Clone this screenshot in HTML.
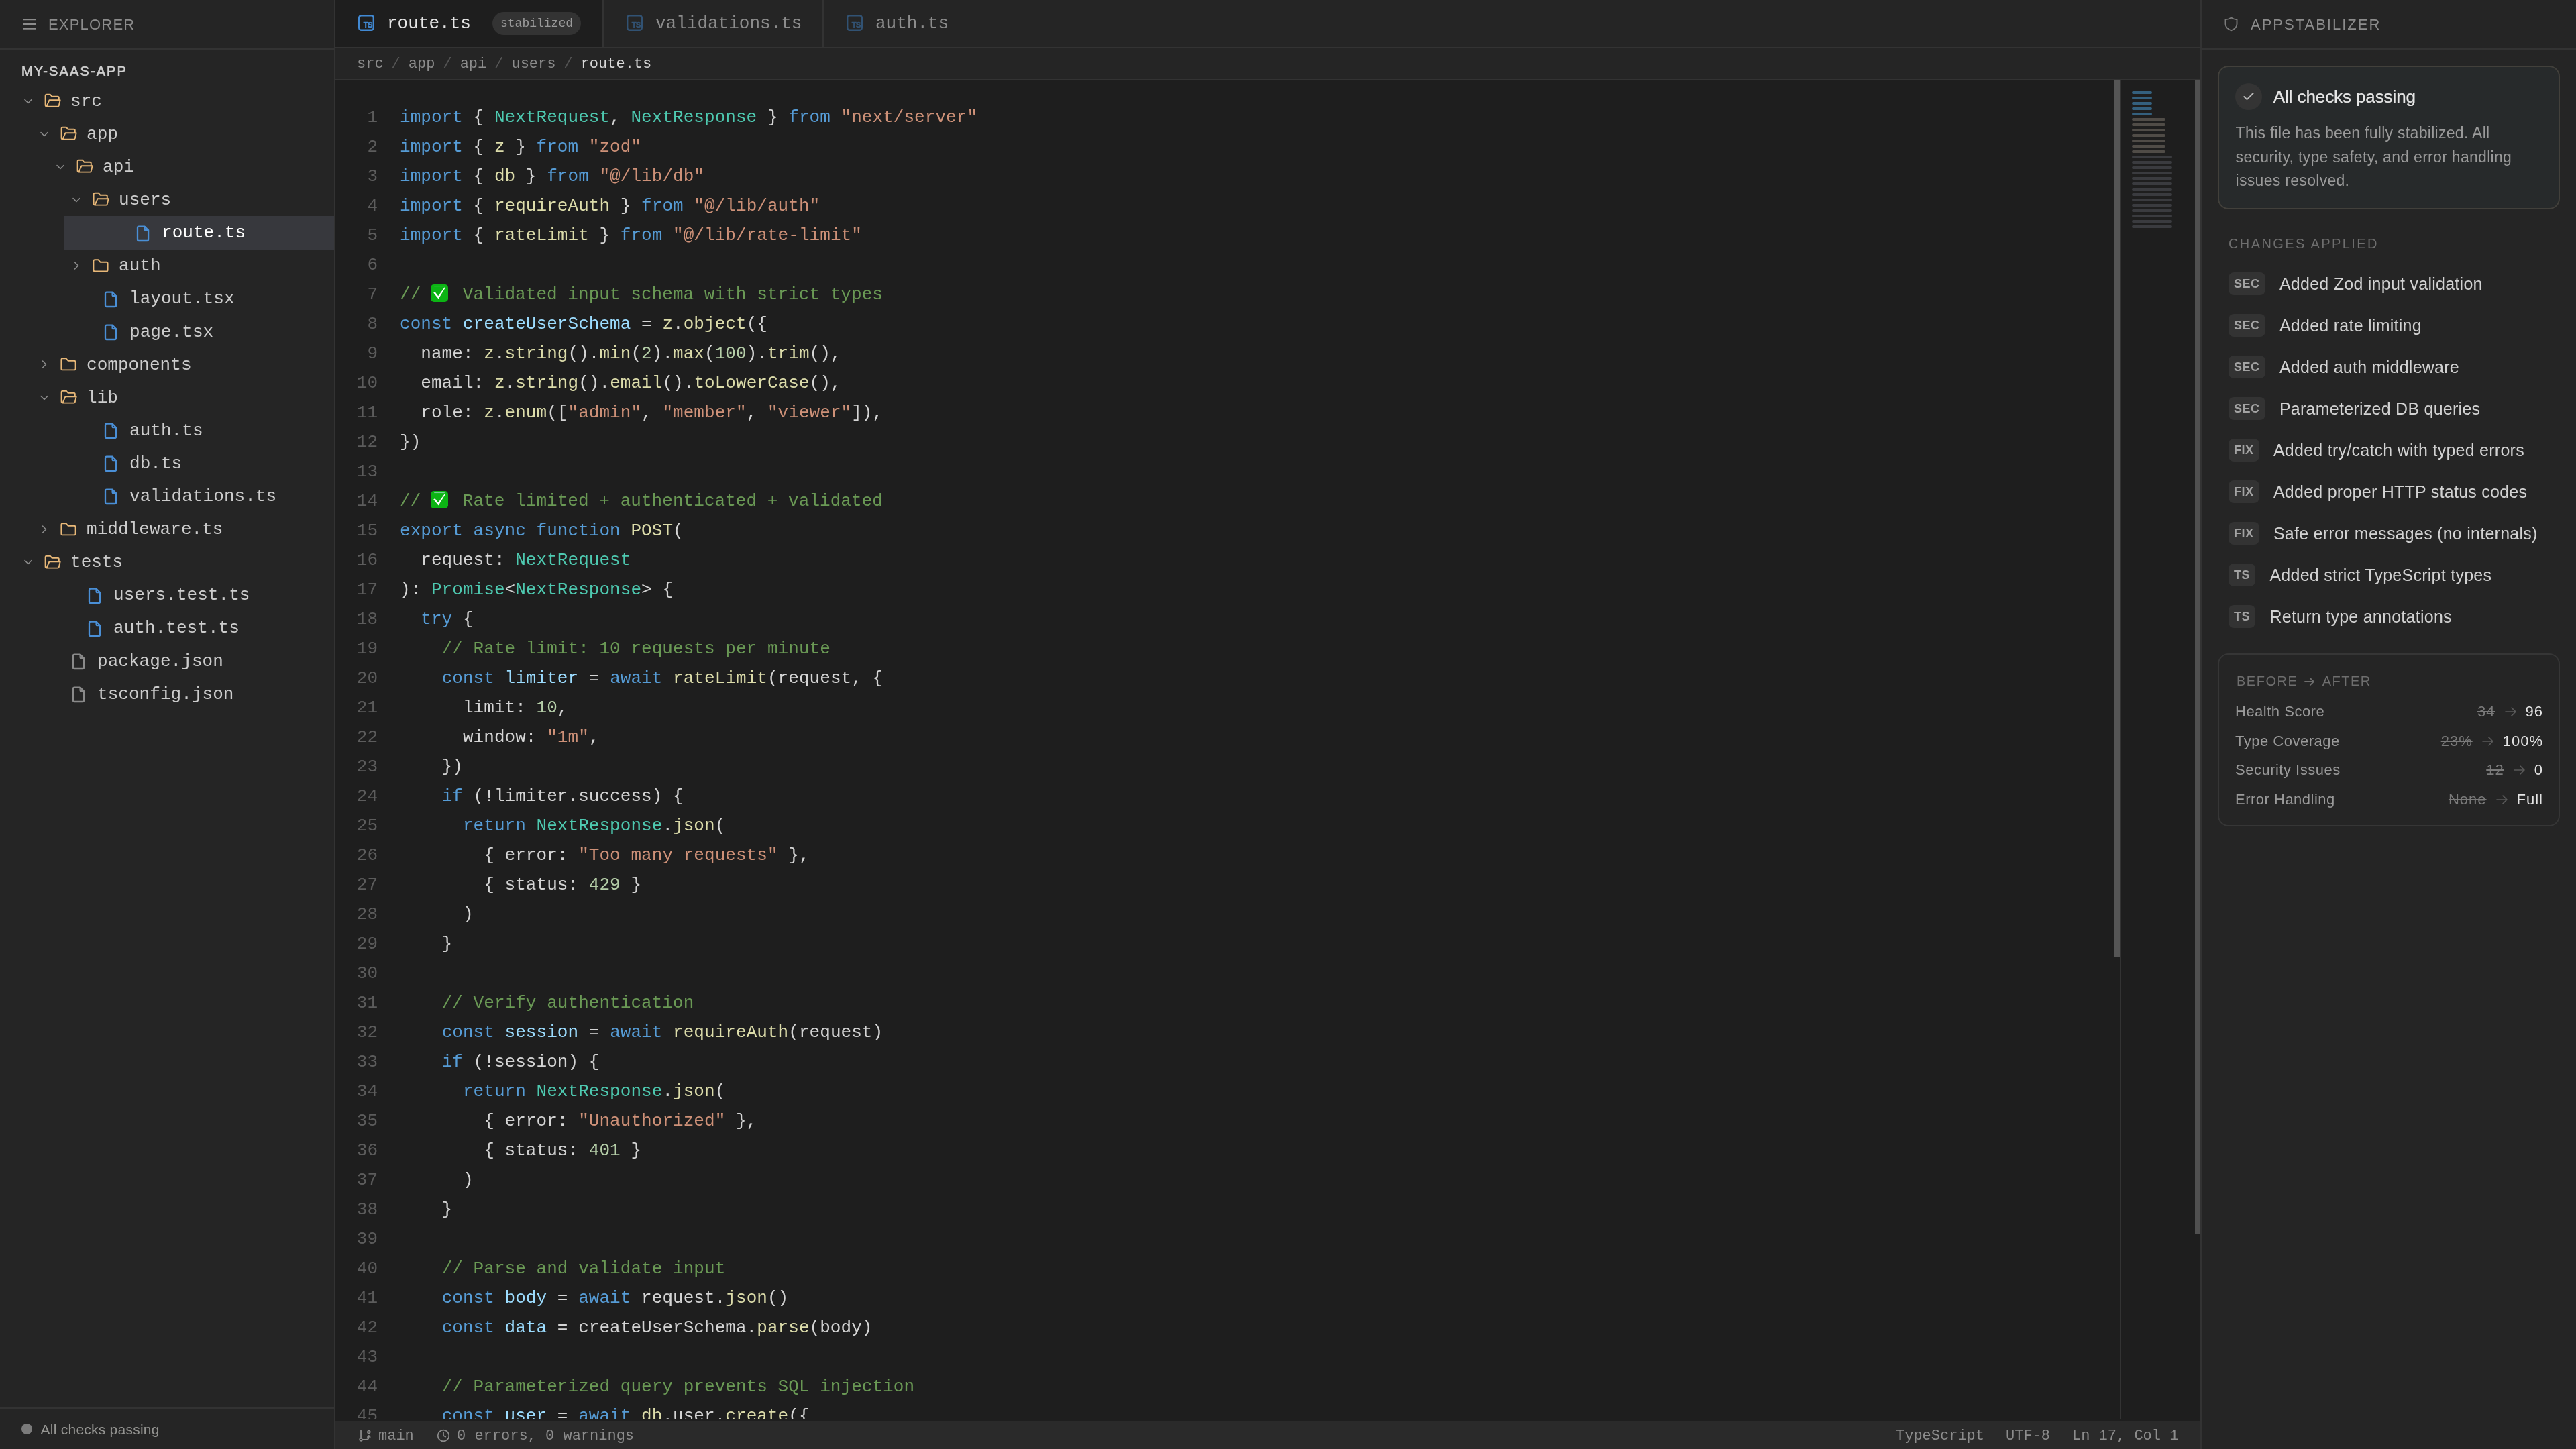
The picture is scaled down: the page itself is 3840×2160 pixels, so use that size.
<!DOCTYPE html>
<html><head><meta charset="utf-8"><title>AppStabilizer</title>
<style>
html,body{margin:0;padding:0;background:#1e1e1e;overflow:hidden}
#root{position:relative;width:1920px;height:1080px;zoom:1;overflow:hidden;background:#1e1e1e;font-family:"Liberation Sans", sans-serif}
@media (min-width:2400px){#root{zoom:2}}
#wrap{position:absolute;left:0;top:0;width:1920px;height:1080px;will-change:transform}
.abs{position:absolute}
.ic{position:absolute;display:block}
/* sidebar */
#side{position:absolute;left:0;top:0;width:249px;height:1080px;background:#252525;border-right:1px solid #333}
#side .hdr{position:absolute;left:0;top:0;width:249px;height:36px;border-bottom:1px solid #333}
.hdr-t{position:absolute;left:36px;top:0.6px;height:36px;line-height:36px;font-size:11px;letter-spacing:0.6px;color:#8c8c8c;font-family:"Liberation Sans", sans-serif}
.proj{position:absolute;left:16px;top:44.75px;font-size:10px;line-height:16px;letter-spacing:1.05px;color:#d0d0d0;-webkit-text-stroke:0.3px #d0d0d0;font-family:"Liberation Sans", sans-serif}
.tt{position:absolute;font-family:"Liberation Mono", monospace;font-size:13px;letter-spacing:0.026px;color:#cccccc;white-space:pre}
.sel-t{color:#ffffff}
.sel{position:absolute;left:48px;width:201px;background:#37383d}
.foot{position:absolute;left:0;top:1049px;width:249px;height:31px;border-top:1px solid #333}
.foot .dot{position:absolute;left:16px;top:11px;width:8px;height:8px;border-radius:50%;background:#7b7b7b}
.foot .ft{position:absolute;left:30.3px;top:0;line-height:31px;font-size:10.5px;letter-spacing:0.12px;color:#959592;font-family:"Liberation Sans", sans-serif}
/* editor */
#ed{position:absolute;left:250px;top:0;width:1390px;height:1080px;background:#1e1e1e}
.tabs{position:absolute;left:0;top:0;width:1390px;height:35px;background:#252525;border-bottom:1px solid #333}
.tab{position:absolute;top:0;height:35px}
.tab .tn{position:absolute;top:0;line-height:35px;font-family:"Liberation Mono", monospace;font-size:13px;white-space:pre}
.badge{position:absolute;top:9px;height:17px;line-height:17px;border-radius:9px;background:#333;color:#9a9a9a;font-family:"Liberation Mono", monospace;font-size:9px;padding:0 6px}
.crumb{position:absolute;left:0;top:36px;width:1390px;height:23px;background:#252525;border-bottom:1px solid #333}
.crumb .cr{position:absolute;left:16px;top:0.6px;line-height:23px;font-family:"Liberation Mono", monospace;font-size:11px;color:#8c8c8c;white-space:pre}
.crumb .sp{margin:0 6px;color:#555}
.crumb .cur{color:#d9d9d9}
.code{position:absolute;left:0;top:60px;width:1326px;height:998px;overflow:hidden}
.ln{position:absolute;left:0;width:31.5px;text-align:right;height:22px;line-height:22px;font-family:"Liberation Mono", monospace;font-size:13px;color:#5c5c5c}
.cl{position:absolute;left:48px;height:22px;line-height:22px;font-family:"Liberation Mono", monospace;font-size:13px;letter-spacing:0.026px;color:#d4d4d4;white-space:pre}
.k{color:#569cd6} .t{color:#4ec9b0} .f{color:#dcdcaa} .s{color:#ce9178} .c{color:#6a9955} .v{color:#9cdcfe} .n{color:#b5cea8}
.emo{display:inline-block;width:15.6px;height:22px;position:relative;vertical-align:top}
.emo svg{position:absolute;left:-0.5px;top:3.6px}
.vs1{position:absolute;left:1326px;top:60px;width:4px;height:653px;background:#555}
.mmap{position:absolute;left:1330px;top:60px;width:59px;height:998px;border-left:1px solid #333;background:#1e1e1e}
.mm{position:absolute;left:1339px;height:2px;border-radius:1px}
.vs2{position:absolute;left:1386px;top:60px;width:4px;height:860px;background:#505050}
.status{position:absolute;left:0;top:1059px;width:1390px;height:21px;background:#2a2a2a}
.st{position:absolute;top:1px;line-height:21px;font-family:"Liberation Mono", monospace;font-size:11px;color:#8c8c8c;white-space:pre}
/* right panel */
#rp{position:absolute;left:1640px;top:0;width:279px;height:1080px;background:#252525;border-left:1px solid #333}
#rp .hdr{position:absolute;left:0;top:0;width:279px;height:36px;border-bottom:1px solid #333}
.card{position:absolute;left:12px;top:49px;width:253px;height:105px;border:1px solid #42403b;border-radius:8px;background:#272a2b}
.chk{position:absolute;left:12px;top:12px;width:20px;height:20px;border-radius:50%;background:#343434}
.ctitle{position:absolute;left:40.4px;top:12px;line-height:20px;font-size:13px;color:#e6e6e6;-webkit-text-stroke:0.12px #e6e6e6;letter-spacing:-0.05px}
.cdesc{position:absolute;left:12.3px;top:40.7px;width:240px;line-height:17.6px;font-size:11.5px;letter-spacing:0.15px;color:#9a9a9a}
.sec{position:absolute;left:20px;font-size:10px;letter-spacing:1.2px;color:#6e6e6e}
.chg{position:absolute;left:20px;height:18px;white-space:nowrap}
.bdg{display:inline-block;vertical-align:top;margin-top:2px;height:17px;line-height:17px;padding:0 4px;border-radius:4px;background:#333;color:#a3a3a3;font-size:9px;font-weight:bold;letter-spacing:0.25px}
.ctx{display:inline-block;vertical-align:top;margin-left:10.7px;margin-top:1.4px;line-height:18px;font-size:12.5px;letter-spacing:0.13px;color:#d2d2d2}
.card2{position:absolute;left:12px;top:487px;width:253px;height:127px;border:1px solid #363636;border-radius:8px}
.mt{position:absolute;left:25px;width:229px;height:20px;line-height:20px;font-size:11px;letter-spacing:0.25px}
.ml{position:absolute;left:0;color:#9a9a9a}
.mv{position:absolute;right:0;color:#e6e6e6;white-space:nowrap}
.mv s{color:#7a7a7a;letter-spacing:0.5px}
.mv i{font-style:normal;margin:0 7px}
.mv b{font-weight:normal;color:#e4e4e4;letter-spacing:0.5px;margin-right:-0.5px}
</style></head><body><div id="root"><div id="wrap">

<div id="side">
 <div class="hdr">
  <svg class="ic" style="left:17px;top:14px" width="10" height="9" viewBox="0 0 10 9"><path d="M0.5 0.65H9.5M0.5 4H9.5M0.5 7.4H9.5" stroke="#8c8c8c" stroke-width="0.9"/></svg>
  <div class="hdr-t">EXPLORER</div>
 </div>
 <div class="proj">MY-SAAS-APP</div>
 <svg class="ic" style="left:16.00px;top:70.30px" width="10" height="10" viewBox="0 0 24 24" fill="none" stroke="#8a8a8a" stroke-width="1.9" stroke-linecap="round" stroke-linejoin="round"><path d="m6 9 6 6 6-6"/></svg><svg class="ic" style="left:32.00px;top:69.05px" width="14" height="12" viewBox="0 0 14 12" fill="none" stroke="#e8b878" stroke-width="0.95" stroke-linecap="round" stroke-linejoin="round"><path d="M11.9 5.6V3.85Q11.9 2.9 10.95 2.9H6.75L5.35 1.35H2.8Q1.8 1.35 1.8 2.35V9.3Q1.8 10.3 2.8 10.3H11.2Q11.7 10.3 11.85 9.8L12.85 5.6H4.75L2.7 10.3"/></svg><div class="tt" style="left:52.50px;top:63.43px;height:24.55px;line-height:24.55px">src</div>
<svg class="ic" style="left:28.00px;top:94.86px" width="10" height="10" viewBox="0 0 24 24" fill="none" stroke="#8a8a8a" stroke-width="1.9" stroke-linecap="round" stroke-linejoin="round"><path d="m6 9 6 6 6-6"/></svg><svg class="ic" style="left:44.00px;top:93.61px" width="14" height="12" viewBox="0 0 14 12" fill="none" stroke="#e8b878" stroke-width="0.95" stroke-linecap="round" stroke-linejoin="round"><path d="M11.9 5.6V3.85Q11.9 2.9 10.95 2.9H6.75L5.35 1.35H2.8Q1.8 1.35 1.8 2.35V9.3Q1.8 10.3 2.8 10.3H11.2Q11.7 10.3 11.85 9.8L12.85 5.6H4.75L2.7 10.3"/></svg><div class="tt" style="left:64.50px;top:87.98px;height:24.55px;line-height:24.55px">app</div>
<svg class="ic" style="left:40.00px;top:119.41px" width="10" height="10" viewBox="0 0 24 24" fill="none" stroke="#8a8a8a" stroke-width="1.9" stroke-linecap="round" stroke-linejoin="round"><path d="m6 9 6 6 6-6"/></svg><svg class="ic" style="left:56.00px;top:118.16px" width="14" height="12" viewBox="0 0 14 12" fill="none" stroke="#e8b878" stroke-width="0.95" stroke-linecap="round" stroke-linejoin="round"><path d="M11.9 5.6V3.85Q11.9 2.9 10.95 2.9H6.75L5.35 1.35H2.8Q1.8 1.35 1.8 2.35V9.3Q1.8 10.3 2.8 10.3H11.2Q11.7 10.3 11.85 9.8L12.85 5.6H4.75L2.7 10.3"/></svg><div class="tt" style="left:76.50px;top:112.53px;height:24.55px;line-height:24.55px">api</div>
<svg class="ic" style="left:52.00px;top:143.96px" width="10" height="10" viewBox="0 0 24 24" fill="none" stroke="#8a8a8a" stroke-width="1.9" stroke-linecap="round" stroke-linejoin="round"><path d="m6 9 6 6 6-6"/></svg><svg class="ic" style="left:68.00px;top:142.71px" width="14" height="12" viewBox="0 0 14 12" fill="none" stroke="#e8b878" stroke-width="0.95" stroke-linecap="round" stroke-linejoin="round"><path d="M11.9 5.6V3.85Q11.9 2.9 10.95 2.9H6.75L5.35 1.35H2.8Q1.8 1.35 1.8 2.35V9.3Q1.8 10.3 2.8 10.3H11.2Q11.7 10.3 11.85 9.8L12.85 5.6H4.75L2.7 10.3"/></svg><div class="tt" style="left:88.50px;top:137.08px;height:24.55px;line-height:24.55px">users</div>
<div class="sel" style="top:161.18px;height:25.00px"></div><svg class="ic" style="left:99.50px;top:167.31px" width="14" height="13" viewBox="0 0 14 13" fill="none" stroke="#4a8fd6" stroke-width="1.15" stroke-linecap="round" stroke-linejoin="round"><path d="M3 2.35Q3 1.35 4 1.35H8.35L11.05 4.15V11Q11.05 12 10.05 12H4Q3 12 3 11Z"/><path d="M8.3 1.6V3.4Q8.3 4.1 9 4.1H10.8"/></svg><div class="tt sel-t" style="left:120.50px;top:161.63px;height:24.55px;line-height:24.55px">route.ts</div>
<svg class="ic" style="left:52.00px;top:193.06px" width="10" height="10" viewBox="0 0 24 24" fill="none" stroke="#8a8a8a" stroke-width="1.9" stroke-linecap="round" stroke-linejoin="round"><path d="m9 18 6-6-6-6"/></svg><svg class="ic" style="left:68.00px;top:191.86px" width="14" height="12" viewBox="0 0 14 12" fill="none" stroke="#e8b878" stroke-width="0.95" stroke-linecap="round" stroke-linejoin="round"><path d="M1.7 2.65Q1.7 1.65 2.7 1.65H5.3L6.7 3.35H11.3Q12.3 3.35 12.3 4.35V9.2Q12.3 10.2 11.3 10.2H2.7Q1.7 10.2 1.7 9.2Z"/></svg><div class="tt" style="left:88.50px;top:186.18px;height:24.55px;line-height:24.55px">auth</div>
<svg class="ic" style="left:75.50px;top:216.41px" width="14" height="13" viewBox="0 0 14 13" fill="none" stroke="#4a8fd6" stroke-width="1.15" stroke-linecap="round" stroke-linejoin="round"><path d="M3 2.35Q3 1.35 4 1.35H8.35L11.05 4.15V11Q11.05 12 10.05 12H4Q3 12 3 11Z"/><path d="M8.3 1.6V3.4Q8.3 4.1 9 4.1H10.8"/></svg><div class="tt" style="left:96.50px;top:210.73px;height:24.55px;line-height:24.55px">layout.tsx</div>
<svg class="ic" style="left:75.50px;top:240.96px" width="14" height="13" viewBox="0 0 14 13" fill="none" stroke="#4a8fd6" stroke-width="1.15" stroke-linecap="round" stroke-linejoin="round"><path d="M3 2.35Q3 1.35 4 1.35H8.35L11.05 4.15V11Q11.05 12 10.05 12H4Q3 12 3 11Z"/><path d="M8.3 1.6V3.4Q8.3 4.1 9 4.1H10.8"/></svg><div class="tt" style="left:96.50px;top:235.28px;height:24.55px;line-height:24.55px">page.tsx</div>
<svg class="ic" style="left:28.00px;top:266.70px" width="10" height="10" viewBox="0 0 24 24" fill="none" stroke="#8a8a8a" stroke-width="1.9" stroke-linecap="round" stroke-linejoin="round"><path d="m9 18 6-6-6-6"/></svg><svg class="ic" style="left:44.00px;top:265.50px" width="14" height="12" viewBox="0 0 14 12" fill="none" stroke="#e8b878" stroke-width="0.95" stroke-linecap="round" stroke-linejoin="round"><path d="M1.7 2.65Q1.7 1.65 2.7 1.65H5.3L6.7 3.35H11.3Q12.3 3.35 12.3 4.35V9.2Q12.3 10.2 11.3 10.2H2.7Q1.7 10.2 1.7 9.2Z"/></svg><div class="tt" style="left:64.50px;top:259.83px;height:24.55px;line-height:24.55px">components</div>
<svg class="ic" style="left:28.00px;top:291.25px" width="10" height="10" viewBox="0 0 24 24" fill="none" stroke="#8a8a8a" stroke-width="1.9" stroke-linecap="round" stroke-linejoin="round"><path d="m6 9 6 6 6-6"/></svg><svg class="ic" style="left:44.00px;top:290.00px" width="14" height="12" viewBox="0 0 14 12" fill="none" stroke="#e8b878" stroke-width="0.95" stroke-linecap="round" stroke-linejoin="round"><path d="M11.9 5.6V3.85Q11.9 2.9 10.95 2.9H6.75L5.35 1.35H2.8Q1.8 1.35 1.8 2.35V9.3Q1.8 10.3 2.8 10.3H11.2Q11.7 10.3 11.85 9.8L12.85 5.6H4.75L2.7 10.3"/></svg><div class="tt" style="left:64.50px;top:284.38px;height:24.55px;line-height:24.55px">lib</div>
<svg class="ic" style="left:75.50px;top:314.60px" width="14" height="13" viewBox="0 0 14 13" fill="none" stroke="#4a8fd6" stroke-width="1.15" stroke-linecap="round" stroke-linejoin="round"><path d="M3 2.35Q3 1.35 4 1.35H8.35L11.05 4.15V11Q11.05 12 10.05 12H4Q3 12 3 11Z"/><path d="M8.3 1.6V3.4Q8.3 4.1 9 4.1H10.8"/></svg><div class="tt" style="left:96.50px;top:308.93px;height:24.55px;line-height:24.55px">auth.ts</div>
<svg class="ic" style="left:75.50px;top:339.15px" width="14" height="13" viewBox="0 0 14 13" fill="none" stroke="#4a8fd6" stroke-width="1.15" stroke-linecap="round" stroke-linejoin="round"><path d="M3 2.35Q3 1.35 4 1.35H8.35L11.05 4.15V11Q11.05 12 10.05 12H4Q3 12 3 11Z"/><path d="M8.3 1.6V3.4Q8.3 4.1 9 4.1H10.8"/></svg><div class="tt" style="left:96.50px;top:333.48px;height:24.55px;line-height:24.55px">db.ts</div>
<svg class="ic" style="left:75.50px;top:363.70px" width="14" height="13" viewBox="0 0 14 13" fill="none" stroke="#4a8fd6" stroke-width="1.15" stroke-linecap="round" stroke-linejoin="round"><path d="M3 2.35Q3 1.35 4 1.35H8.35L11.05 4.15V11Q11.05 12 10.05 12H4Q3 12 3 11Z"/><path d="M8.3 1.6V3.4Q8.3 4.1 9 4.1H10.8"/></svg><div class="tt" style="left:96.50px;top:358.03px;height:24.55px;line-height:24.55px">validations.ts</div>
<svg class="ic" style="left:28.00px;top:389.46px" width="10" height="10" viewBox="0 0 24 24" fill="none" stroke="#8a8a8a" stroke-width="1.9" stroke-linecap="round" stroke-linejoin="round"><path d="m9 18 6-6-6-6"/></svg><svg class="ic" style="left:44.00px;top:388.25px" width="14" height="12" viewBox="0 0 14 12" fill="none" stroke="#e8b878" stroke-width="0.95" stroke-linecap="round" stroke-linejoin="round"><path d="M1.7 2.65Q1.7 1.65 2.7 1.65H5.3L6.7 3.35H11.3Q12.3 3.35 12.3 4.35V9.2Q12.3 10.2 11.3 10.2H2.7Q1.7 10.2 1.7 9.2Z"/></svg><div class="tt" style="left:64.50px;top:382.58px;height:24.55px;line-height:24.55px">middleware.ts</div>
<svg class="ic" style="left:16.00px;top:414.00px" width="10" height="10" viewBox="0 0 24 24" fill="none" stroke="#8a8a8a" stroke-width="1.9" stroke-linecap="round" stroke-linejoin="round"><path d="m6 9 6 6 6-6"/></svg><svg class="ic" style="left:32.00px;top:412.75px" width="14" height="12" viewBox="0 0 14 12" fill="none" stroke="#e8b878" stroke-width="0.95" stroke-linecap="round" stroke-linejoin="round"><path d="M11.9 5.6V3.85Q11.9 2.9 10.95 2.9H6.75L5.35 1.35H2.8Q1.8 1.35 1.8 2.35V9.3Q1.8 10.3 2.8 10.3H11.2Q11.7 10.3 11.85 9.8L12.85 5.6H4.75L2.7 10.3"/></svg><div class="tt" style="left:52.50px;top:407.13px;height:24.55px;line-height:24.55px">tests</div>
<svg class="ic" style="left:63.50px;top:437.35px" width="14" height="13" viewBox="0 0 14 13" fill="none" stroke="#4a8fd6" stroke-width="1.15" stroke-linecap="round" stroke-linejoin="round"><path d="M3 2.35Q3 1.35 4 1.35H8.35L11.05 4.15V11Q11.05 12 10.05 12H4Q3 12 3 11Z"/><path d="M8.3 1.6V3.4Q8.3 4.1 9 4.1H10.8"/></svg><div class="tt" style="left:84.50px;top:431.68px;height:24.55px;line-height:24.55px">users.test.ts</div>
<svg class="ic" style="left:63.50px;top:461.90px" width="14" height="13" viewBox="0 0 14 13" fill="none" stroke="#4a8fd6" stroke-width="1.15" stroke-linecap="round" stroke-linejoin="round"><path d="M3 2.35Q3 1.35 4 1.35H8.35L11.05 4.15V11Q11.05 12 10.05 12H4Q3 12 3 11Z"/><path d="M8.3 1.6V3.4Q8.3 4.1 9 4.1H10.8"/></svg><div class="tt" style="left:84.50px;top:456.23px;height:24.55px;line-height:24.55px">auth.test.ts</div>
<svg class="ic" style="left:51.50px;top:486.45px" width="14" height="13" viewBox="0 0 14 13" fill="none" stroke="#8a8a8a" stroke-width="1.15" stroke-linecap="round" stroke-linejoin="round"><path d="M3 2.35Q3 1.35 4 1.35H8.35L11.05 4.15V11Q11.05 12 10.05 12H4Q3 12 3 11Z"/><path d="M8.3 1.6V3.4Q8.3 4.1 9 4.1H10.8"/></svg><div class="tt" style="left:72.50px;top:480.78px;height:24.55px;line-height:24.55px">package.json</div>
<svg class="ic" style="left:51.50px;top:511.00px" width="14" height="13" viewBox="0 0 14 13" fill="none" stroke="#8a8a8a" stroke-width="1.15" stroke-linecap="round" stroke-linejoin="round"><path d="M3 2.35Q3 1.35 4 1.35H8.35L11.05 4.15V11Q11.05 12 10.05 12H4Q3 12 3 11Z"/><path d="M8.3 1.6V3.4Q8.3 4.1 9 4.1H10.8"/></svg><div class="tt" style="left:72.50px;top:505.33px;height:24.55px;line-height:24.55px">tsconfig.json</div>
 <div class="foot"><div class="dot"></div><div class="ft">All checks passing</div></div>
</div>

<div id="ed">
 <div class="tabs">
  <div class="tab" style="left:0;width:199px;background:#1e1e1e;border-right:1px solid #333">
   <svg class="ic" style="left:17.00px;top:11px;opacity:1" width="12" height="12" viewBox="0 0 12 12"><rect x="0.6" y="0.6" width="10.8" height="10.8" rx="1.7" fill="none" stroke="#4189d3" stroke-width="1.2"/><text x="7.2" y="9.7" text-anchor="middle" font-family="Liberation Sans, sans-serif" font-weight="bold" font-size="5.6" fill="#4189d3" stroke="#4189d3" stroke-width="0.25" letter-spacing="-0.2">TS</text></svg>
   <div class="tn" style="left:38.5px;color:#e6e6e6">route.ts</div>
   <div class="badge" style="left:117px">stabilized</div>
  </div>
  <div class="tab" style="left:200px;width:163px;border-right:1px solid #333">
   <svg class="ic" style="left:17.00px;top:11px;opacity:0.45" width="12" height="12" viewBox="0 0 12 12"><rect x="0.6" y="0.6" width="10.8" height="10.8" rx="1.7" fill="none" stroke="#4189d3" stroke-width="1.2"/><text x="7.2" y="9.7" text-anchor="middle" font-family="Liberation Sans, sans-serif" font-weight="bold" font-size="5.6" fill="#4189d3" stroke="#4189d3" stroke-width="0.25" letter-spacing="-0.2">TS</text></svg>
   <div class="tn" style="left:38.5px;color:#8c8c8c">validations.ts</div>
  </div>
  <div class="tab" style="left:364px;width:120px">
   <svg class="ic" style="left:17.00px;top:11px;opacity:0.45" width="12" height="12" viewBox="0 0 12 12"><rect x="0.6" y="0.6" width="10.8" height="10.8" rx="1.7" fill="none" stroke="#4189d3" stroke-width="1.2"/><text x="7.2" y="9.7" text-anchor="middle" font-family="Liberation Sans, sans-serif" font-weight="bold" font-size="5.6" fill="#4189d3" stroke="#4189d3" stroke-width="0.25" letter-spacing="-0.2">TS</text></svg>
   <div class="tn" style="left:38.5px;color:#8c8c8c">auth.ts</div>
  </div>
 </div>
 <div class="crumb"><div class="cr">src<span class="sp">/</span>app<span class="sp">/</span>api<span class="sp">/</span>users<span class="sp">/</span><span class="cur">route.ts</span></div></div>
 <div class="code">
 <div class="ln" style="top:16.40px">1</div><div class="cl" style="top:16.40px"><span class="k">import</span> { <span class="t">NextRequest</span>, <span class="t">NextResponse</span> } <span class="k">from</span> <span class="s">"next/server"</span></div>
<div class="ln" style="top:38.40px">2</div><div class="cl" style="top:38.40px"><span class="k">import</span> { <span class="f">z</span> } <span class="k">from</span> <span class="s">"zod"</span></div>
<div class="ln" style="top:60.40px">3</div><div class="cl" style="top:60.40px"><span class="k">import</span> { <span class="f">db</span> } <span class="k">from</span> <span class="s">"@/lib/db"</span></div>
<div class="ln" style="top:82.40px">4</div><div class="cl" style="top:82.40px"><span class="k">import</span> { <span class="f">requireAuth</span> } <span class="k">from</span> <span class="s">"@/lib/auth"</span></div>
<div class="ln" style="top:104.40px">5</div><div class="cl" style="top:104.40px"><span class="k">import</span> { <span class="f">rateLimit</span> } <span class="k">from</span> <span class="s">"@/lib/rate-limit"</span></div>
<div class="ln" style="top:126.40px">6</div><div class="cl" style="top:126.40px"></div>
<div class="ln" style="top:148.40px">7</div><div class="cl" style="top:148.40px"><span class="c">// <i class="emo"><svg viewBox="0 0 13 13" width="13" height="13"><rect x="0" y="0" width="13" height="13" rx="2.4" fill="#0cb414"/><path d="M2.6 1.3H10.4" stroke="#9fd6c8" stroke-width="0.5" opacity="0.8"/><path d="M2.1 6.2L3.2 5.5L5.6 8.6L10.5 2.0L11.0 2.4L5.8 10.8Z" fill="#ffffff"/></svg></i> Validated input schema with strict types</span></div>
<div class="ln" style="top:170.40px">8</div><div class="cl" style="top:170.40px"><span class="k">const</span> <span class="v">createUserSchema</span> = <span class="f">z</span>.<span class="f">object</span>({</div>
<div class="ln" style="top:192.40px">9</div><div class="cl" style="top:192.40px">  name: <span class="f">z</span>.<span class="f">string</span>().<span class="f">min</span>(<span class="n">2</span>).<span class="f">max</span>(<span class="n">100</span>).<span class="f">trim</span>(),</div>
<div class="ln" style="top:214.40px">10</div><div class="cl" style="top:214.40px">  email: <span class="f">z</span>.<span class="f">string</span>().<span class="f">email</span>().<span class="f">toLowerCase</span>(),</div>
<div class="ln" style="top:236.40px">11</div><div class="cl" style="top:236.40px">  role: <span class="f">z</span>.<span class="f">enum</span>([<span class="s">"admin"</span>, <span class="s">"member"</span>, <span class="s">"viewer"</span>]),</div>
<div class="ln" style="top:258.40px">12</div><div class="cl" style="top:258.40px">})</div>
<div class="ln" style="top:280.40px">13</div><div class="cl" style="top:280.40px"></div>
<div class="ln" style="top:302.40px">14</div><div class="cl" style="top:302.40px"><span class="c">// <i class="emo"><svg viewBox="0 0 13 13" width="13" height="13"><rect x="0" y="0" width="13" height="13" rx="2.4" fill="#0cb414"/><path d="M2.6 1.3H10.4" stroke="#9fd6c8" stroke-width="0.5" opacity="0.8"/><path d="M2.1 6.2L3.2 5.5L5.6 8.6L10.5 2.0L11.0 2.4L5.8 10.8Z" fill="#ffffff"/></svg></i> Rate limited + authenticated + validated</span></div>
<div class="ln" style="top:324.40px">15</div><div class="cl" style="top:324.40px"><span class="k">export</span> <span class="k">async</span> <span class="k">function</span> <span class="f">POST</span>(</div>
<div class="ln" style="top:346.40px">16</div><div class="cl" style="top:346.40px">  request: <span class="t">NextRequest</span></div>
<div class="ln" style="top:368.40px">17</div><div class="cl" style="top:368.40px">): <span class="t">Promise</span>&lt;<span class="t">NextResponse</span>&gt; {</div>
<div class="ln" style="top:390.40px">18</div><div class="cl" style="top:390.40px">  <span class="k">try</span> {</div>
<div class="ln" style="top:412.40px">19</div><div class="cl" style="top:412.40px">    <span class="c">// Rate limit: 10 requests per minute</span></div>
<div class="ln" style="top:434.40px">20</div><div class="cl" style="top:434.40px">    <span class="k">const</span> <span class="v">limiter</span> = <span class="k">await</span> <span class="f">rateLimit</span>(request, {</div>
<div class="ln" style="top:456.40px">21</div><div class="cl" style="top:456.40px">      limit: <span class="n">10</span>,</div>
<div class="ln" style="top:478.40px">22</div><div class="cl" style="top:478.40px">      window: <span class="s">"1m"</span>,</div>
<div class="ln" style="top:500.40px">23</div><div class="cl" style="top:500.40px">    })</div>
<div class="ln" style="top:522.40px">24</div><div class="cl" style="top:522.40px">    <span class="k">if</span> (!limiter.success) {</div>
<div class="ln" style="top:544.40px">25</div><div class="cl" style="top:544.40px">      <span class="k">return</span> <span class="t">NextResponse</span>.<span class="f">json</span>(</div>
<div class="ln" style="top:566.40px">26</div><div class="cl" style="top:566.40px">        { error: <span class="s">"Too many requests"</span> },</div>
<div class="ln" style="top:588.40px">27</div><div class="cl" style="top:588.40px">        { status: <span class="n">429</span> }</div>
<div class="ln" style="top:610.40px">28</div><div class="cl" style="top:610.40px">      )</div>
<div class="ln" style="top:632.40px">29</div><div class="cl" style="top:632.40px">    }</div>
<div class="ln" style="top:654.40px">30</div><div class="cl" style="top:654.40px"></div>
<div class="ln" style="top:676.40px">31</div><div class="cl" style="top:676.40px">    <span class="c">// Verify authentication</span></div>
<div class="ln" style="top:698.40px">32</div><div class="cl" style="top:698.40px">    <span class="k">const</span> <span class="v">session</span> = <span class="k">await</span> <span class="f">requireAuth</span>(request)</div>
<div class="ln" style="top:720.40px">33</div><div class="cl" style="top:720.40px">    <span class="k">if</span> (!session) {</div>
<div class="ln" style="top:742.40px">34</div><div class="cl" style="top:742.40px">      <span class="k">return</span> <span class="t">NextResponse</span>.<span class="f">json</span>(</div>
<div class="ln" style="top:764.40px">35</div><div class="cl" style="top:764.40px">        { error: <span class="s">"Unauthorized"</span> },</div>
<div class="ln" style="top:786.40px">36</div><div class="cl" style="top:786.40px">        { status: <span class="n">401</span> }</div>
<div class="ln" style="top:808.40px">37</div><div class="cl" style="top:808.40px">      )</div>
<div class="ln" style="top:830.40px">38</div><div class="cl" style="top:830.40px">    }</div>
<div class="ln" style="top:852.40px">39</div><div class="cl" style="top:852.40px"></div>
<div class="ln" style="top:874.40px">40</div><div class="cl" style="top:874.40px">    <span class="c">// Parse and validate input</span></div>
<div class="ln" style="top:896.40px">41</div><div class="cl" style="top:896.40px">    <span class="k">const</span> <span class="v">body</span> = <span class="k">await</span> request.<span class="f">json</span>()</div>
<div class="ln" style="top:918.40px">42</div><div class="cl" style="top:918.40px">    <span class="k">const</span> <span class="v">data</span> = createUserSchema.<span class="f">parse</span>(body)</div>
<div class="ln" style="top:940.40px">43</div><div class="cl" style="top:940.40px"></div>
<div class="ln" style="top:962.40px">44</div><div class="cl" style="top:962.40px">    <span class="c">// Parameterized query prevents SQL injection</span></div>
<div class="ln" style="top:984.40px">45</div><div class="cl" style="top:984.40px">    <span class="k">const</span> <span class="v">user</span> = <span class="k">await</span> <span class="f">db</span>.user.<span class="f">create</span>({</div>
 </div>
 <div class="vs1"></div>
 <div class="mmap"></div>
 <div class="mm" style="top:68px;width:15px;background:#34607e"></div><div class="mm" style="top:72px;width:15px;background:#34607e"></div><div class="mm" style="top:76px;width:15px;background:#34607e"></div><div class="mm" style="top:80px;width:15px;background:#34607e"></div><div class="mm" style="top:84px;width:15px;background:#34607e"></div><div class="mm" style="top:88px;width:25px;background:#504c47"></div><div class="mm" style="top:92px;width:25px;background:#504c47"></div><div class="mm" style="top:96px;width:25px;background:#504c47"></div><div class="mm" style="top:100px;width:25px;background:#504c47"></div><div class="mm" style="top:104px;width:25px;background:#504c47"></div><div class="mm" style="top:108px;width:25px;background:#504c47"></div><div class="mm" style="top:112px;width:25px;background:#504c47"></div><div class="mm" style="top:116px;width:30px;background:#3a3b3f"></div><div class="mm" style="top:120px;width:30px;background:#3a3b3f"></div><div class="mm" style="top:124px;width:30px;background:#3a3b3f"></div><div class="mm" style="top:128px;width:30px;background:#3a3b3f"></div><div class="mm" style="top:132px;width:30px;background:#3a3b3f"></div><div class="mm" style="top:136px;width:30px;background:#3a3b3f"></div><div class="mm" style="top:140px;width:30px;background:#3a3b3f"></div><div class="mm" style="top:144px;width:30px;background:#3a3b3f"></div><div class="mm" style="top:148px;width:30px;background:#3a3b3f"></div><div class="mm" style="top:152px;width:30px;background:#3a3b3f"></div><div class="mm" style="top:156px;width:30px;background:#3a3b3f"></div><div class="mm" style="top:160px;width:30px;background:#3a3b3f"></div><div class="mm" style="top:164px;width:30px;background:#3a3b3f"></div><div class="mm" style="top:168px;width:30px;background:#3a3b3f"></div>
 <div class="vs2"></div>
 <div class="status">
  <svg class="ic" style="left:17.5px;top:6.5px" width="9.5" height="9" viewBox="0 0 10 9" fill="none" stroke="#8c8c8c" stroke-width="0.9" stroke-linecap="round" stroke-linejoin="round"><circle cx="1.6" cy="7.6" r="1"/><circle cx="7.8" cy="1.6" r="1"/><path d="M1.6 0.6V6.6"/><path d="M2.6 7.6H5.5Q7.8 7.6 7.8 5.3V4.6"/><path d="M6.8 5.6L7.8 4.6L8.8 5.6"/></svg>
  <div class="st" style="left:32px">main</div>
  <svg class="ic" style="left:75.6px;top:6.1px" width="10" height="10" viewBox="0 0 24 24" fill="none" stroke="#8c8c8c" stroke-width="2" stroke-linecap="round"><circle cx="12" cy="12" r="10"/><path d="M12 6v6l4 2"/></svg>
  <div class="st" style="left:90.5px">0 errors, 0 warnings</div>
  <div class="st" style="left:1163px">TypeScript</div>
  <div class="st" style="left:1245px">UTF-8</div>
  <div class="st" style="left:1294.5px">Ln 17, Col 1</div>
 </div>
</div>

<div id="rp">
 <div class="hdr">
  <svg class="ic" style="left:15.8px;top:12px" width="12" height="12" viewBox="0 0 12 12" fill="none" stroke="#7a7a7a" stroke-width="0.95" stroke-linecap="round" stroke-linejoin="round"><path d="M6 1.25Q4 2.6 1.75 2.7V6Q1.9 9.2 6 10.65Q10.1 9.2 10.25 6V2.7Q8 2.6 6 1.25Z"/></svg>
  <div class="hdr-t" style="left:36.5px;letter-spacing:1.0px">APPSTABILIZER</div>
 </div>
 <div class="card">
  <div class="chk"><svg class="ic" style="left:5px;top:5px" width="10" height="10" viewBox="0 0 24 24" fill="none" stroke="#b5b5b5" stroke-width="2.4" stroke-linecap="round" stroke-linejoin="round"><path d="M20 6 9 17l-5-5"/></svg></div>
  <div class="ctitle">All checks passing</div>
  <div class="cdesc">This file has been fully stabilized. All<br>security, type safety, and error handling<br>issues resolved.</div>
 </div>
 <div class="sec" style="top:176px">CHANGES APPLIED</div>
 <div class="chg" style="top:201px"><span class="bdg">SEC</span><span class="ctx">Added Zod input validation</span></div>
<div class="chg" style="top:232px"><span class="bdg">SEC</span><span class="ctx">Added rate limiting</span></div>
<div class="chg" style="top:263px"><span class="bdg">SEC</span><span class="ctx">Added auth middleware</span></div>
<div class="chg" style="top:294px"><span class="bdg">SEC</span><span class="ctx">Parameterized DB queries</span></div>
<div class="chg" style="top:325px"><span class="bdg">FIX</span><span class="ctx">Added try/catch with typed errors</span></div>
<div class="chg" style="top:356px"><span class="bdg">FIX</span><span class="ctx">Added proper HTTP status codes</span></div>
<div class="chg" style="top:387px"><span class="bdg">FIX</span><span class="ctx">Safe error messages (no internals)</span></div>
<div class="chg" style="top:418px"><span class="bdg">TS</span><span class="ctx">Added strict TypeScript types</span></div>
<div class="chg" style="top:449px"><span class="bdg">TS</span><span class="ctx">Return type annotations</span></div>
 <div class="card2"><div class="sec" style="left:13px;top:13.8px;letter-spacing:0.75px">BEFORE<svg width="7.5" height="6" viewBox="0 0 7.5 6" fill="none" stroke="#6e6e6e" stroke-width="0.9" stroke-linecap="round" stroke-linejoin="round" style="vertical-align:0px;margin:0 5.8px 0 4.9px"><path d="M0.5 3H7M4.4 0.5L7 3L4.4 5.5"/></svg>AFTER</div></div>
 <div class="mt" style="top:520.60px"><span class="ml">Health Score</span><span class="mv"><s>34</s><i><svg width="8.5" height="7" viewBox="0 0 8.5 7" fill="none" stroke="#5a5a5a" stroke-width="0.8" stroke-linecap="round" stroke-linejoin="round"><path d="M0.5 3.5H8M5 0.6L8 3.5L5 6.4"/></svg></i><b>96</b></span></div>
<div class="mt" style="top:542.35px"><span class="ml">Type Coverage</span><span class="mv"><s>23%</s><i><svg width="8.5" height="7" viewBox="0 0 8.5 7" fill="none" stroke="#5a5a5a" stroke-width="0.8" stroke-linecap="round" stroke-linejoin="round"><path d="M0.5 3.5H8M5 0.6L8 3.5L5 6.4"/></svg></i><b>100%</b></span></div>
<div class="mt" style="top:564.10px"><span class="ml">Security Issues</span><span class="mv"><s>12</s><i><svg width="8.5" height="7" viewBox="0 0 8.5 7" fill="none" stroke="#5a5a5a" stroke-width="0.8" stroke-linecap="round" stroke-linejoin="round"><path d="M0.5 3.5H8M5 0.6L8 3.5L5 6.4"/></svg></i><b>0</b></span></div>
<div class="mt" style="top:585.85px"><span class="ml">Error Handling</span><span class="mv"><s>None</s><i><svg width="8.5" height="7" viewBox="0 0 8.5 7" fill="none" stroke="#5a5a5a" stroke-width="0.8" stroke-linecap="round" stroke-linejoin="round"><path d="M0.5 3.5H8M5 0.6L8 3.5L5 6.4"/></svg></i><b>Full</b></span></div>
</div>

</div></div></body></html>
